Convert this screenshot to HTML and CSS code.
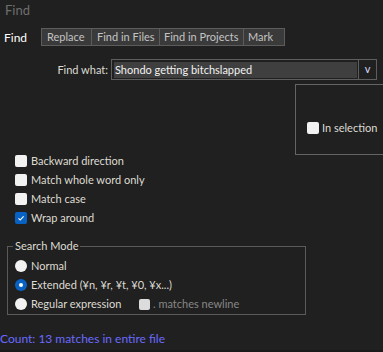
FILE: index.html
```html
<!DOCTYPE html>
<html lang="ja">
<head>
<meta charset="UTF-8">
<meta name="viewport" content="width=device-width, initial-scale=1.0">
<title>Find</title>
<link rel="stylesheet" href="styles.css">
</head>
<body>
<div class="title">Find</div>

<div class="tabs">
    <span class="tab-current">Find</span>
    <div class="tab-strip">
        <span class="tab tab-replace">Replace</span>
        <span class="tab tab-files">Find in Files</span>
        <span class="tab tab-projects">Find in Projects</span>
        <span class="tab tab-mark">Mark</span>
    </div>
</div>

<div class="find-row">
    <label class="find-label">Find what:</label>
    <div class="combo">
        <div class="combo-field">Shondo getting bitchslapped</div>
        <div class="combo-btn">v</div>
    </div>
</div>

<div class="sel-row">
    <div class="sel-box">
        <label class="option"><span class="box"></span>In selection</label>
    </div>
</div>

<div class="options">
    <label class="option"><span class="box"></span>Backward direction</label>
    <label class="option"><span class="box"></span>Match whole word only</label>
    <label class="option"><span class="box"></span>Match case</label>
    <label class="option"><span class="box checked"><svg width="12" height="12" viewBox="0 0 12 12"><polyline points="3.5,6.3 5.2,8 8.6,4.3" fill="none" stroke="#fff" stroke-width="1.1"/></svg></span>Wrap around</label>
</div>

<fieldset class="mode">
    <legend>Search Mode</legend>
    <div class="radios">
        <label class="option"><span class="radio"></span>Normal</label>
        <label class="option"><span class="radio selected"><span class="dot"></span></span>Extended (¥n, ¥r, ¥t, ¥0, ¥x...)</label>
        <div class="option">
            <label class="option regex"><span class="radio"></span>Regular expression</label>
            <label class="option disabled"><span class="box box-small"></span>. matches newline</label>
        </div>
    </div>
</fieldset>

<div class="status">Count: 13 matches in entire file</div>
<div class="bottom"></div>
</body>
</html>
```

FILE: styles.css
```css
body {
    margin: 0;
    width: 383px;
    height: 352px;
    overflow: hidden;
    background-color: #202020;
    color: #dedbd2;
    font-family: Lato, "Noto Sans", sans-serif;
    font-size: 11px;
}

.title {
    height: 22px;
    line-height: 20px;
    padding-left: 5px;
    font-size: 13px;
    color: #6e6e6e;
}

.tabs {
    display: flex;
    align-items: center;
    margin-top: 6px;
    height: 18px;
}

.tab-current {
    width: 41px;
    padding-left: 4px;
    box-sizing: border-box;
    color: #ffffff;
    font-size: 12px;
}

.tab-strip {
    display: flex;
    height: 18px;
    border: 1px solid #5c5c5c;
    border-right: none;
    box-sizing: border-box;
    background-color: #3a3a3a;
}

.tab {
    flex: none;
    padding-left: 4px;
    box-sizing: border-box;
    border-right: 1px solid #5c5c5c;
    color: #c4c4c4;
    line-height: 16px;
    white-space: nowrap;
    overflow: hidden;
}

.tab-replace { width: 50px; padding-left: 5px; }
.tab-files { width: 68px; padding-left: 5px; }
.tab-projects { width: 84px; }
.tab-mark { width: 41px; }

.find-row {
    display: flex;
    align-items: center;
    gap: 3px;
    margin-top: 13px;
    height: 21px;
}

.find-label {
    width: 108px;
    text-align: right;
}

.combo {
    display: flex;
    width: 266px;
    height: 21px;
    border: 1px solid #5e5e5e;
    box-sizing: border-box;
}

.combo-field {
    width: 243px;
    height: 16px;
    margin: 2px 1px 1px 2px;
    padding-left: 1px;
    box-sizing: border-box;
    background-color: #3f3f3f;
    color: #f2f2f2;
    line-height: 16px;
}

.combo-btn {
    flex: 1;
    border-left: 1px solid #5e5e5e;
    text-align: center;
    line-height: 18px;
    color: #d8d8ff;
}

.sel-row {
    margin-top: 4px;
    padding-left: 295px;
}

.sel-box {
    width: 100px;
    height: 71px;
    padding: 37px 0 0 11px;
    border: 1px solid #646464;
    border-right: none;
    box-sizing: border-box;
}

.options {
    display: flex;
    flex-direction: column;
    gap: 7px;
    padding-left: 15px;
}

.option {
    display: flex;
    align-items: center;
    gap: 4px;
    height: 12px;
    line-height: 12px;
    white-space: nowrap;
}

.sel-box .option {
    gap: 3px;
}

.box {
    width: 12px;
    height: 12px;
    border-radius: 2px;
    background-color: #f2f2f2;
    flex-shrink: 0;
}

.box.checked {
    background-color: #0862c4;
}

.box svg {
    display: block;
}

.box-small {
    width: 11px;
    height: 11px;
    background-color: #dcdcdc;
}

.radio {
    display: flex;
    align-items: center;
    justify-content: center;
    width: 12px;
    height: 12px;
    border-radius: 50%;
    background-color: #f2f2f2;
    flex-shrink: 0;
}

.radio.selected {
    background-color: #0862c4;
}

.dot {
    width: 4px;
    height: 4px;
    border-radius: 50%;
    background-color: #ffffff;
}

.mode {
    width: 299px;
    margin: 14px 0 0 7px;
    padding: 6px 7px 4px 7px;
    border: 1px solid #5a5a5a;
    box-sizing: border-box;
    min-width: 0;
}

.mode legend {
    margin-left: -2px;
    padding: 0 2px;
    line-height: 16px;
}

.radios {
    display: flex;
    flex-direction: column;
    gap: 7px;
}

.regex {
    width: 120px;
}

.disabled {
    gap: 3px;
    color: #878787;
}

.status {
    margin-top: 16px;
    line-height: 16px;
    font-size: 12px;
    color: #6a6aff;
}

.bottom {
    margin-top: 3px;
    height: 2px;
    background-color: #1a1a1a;
}
```
